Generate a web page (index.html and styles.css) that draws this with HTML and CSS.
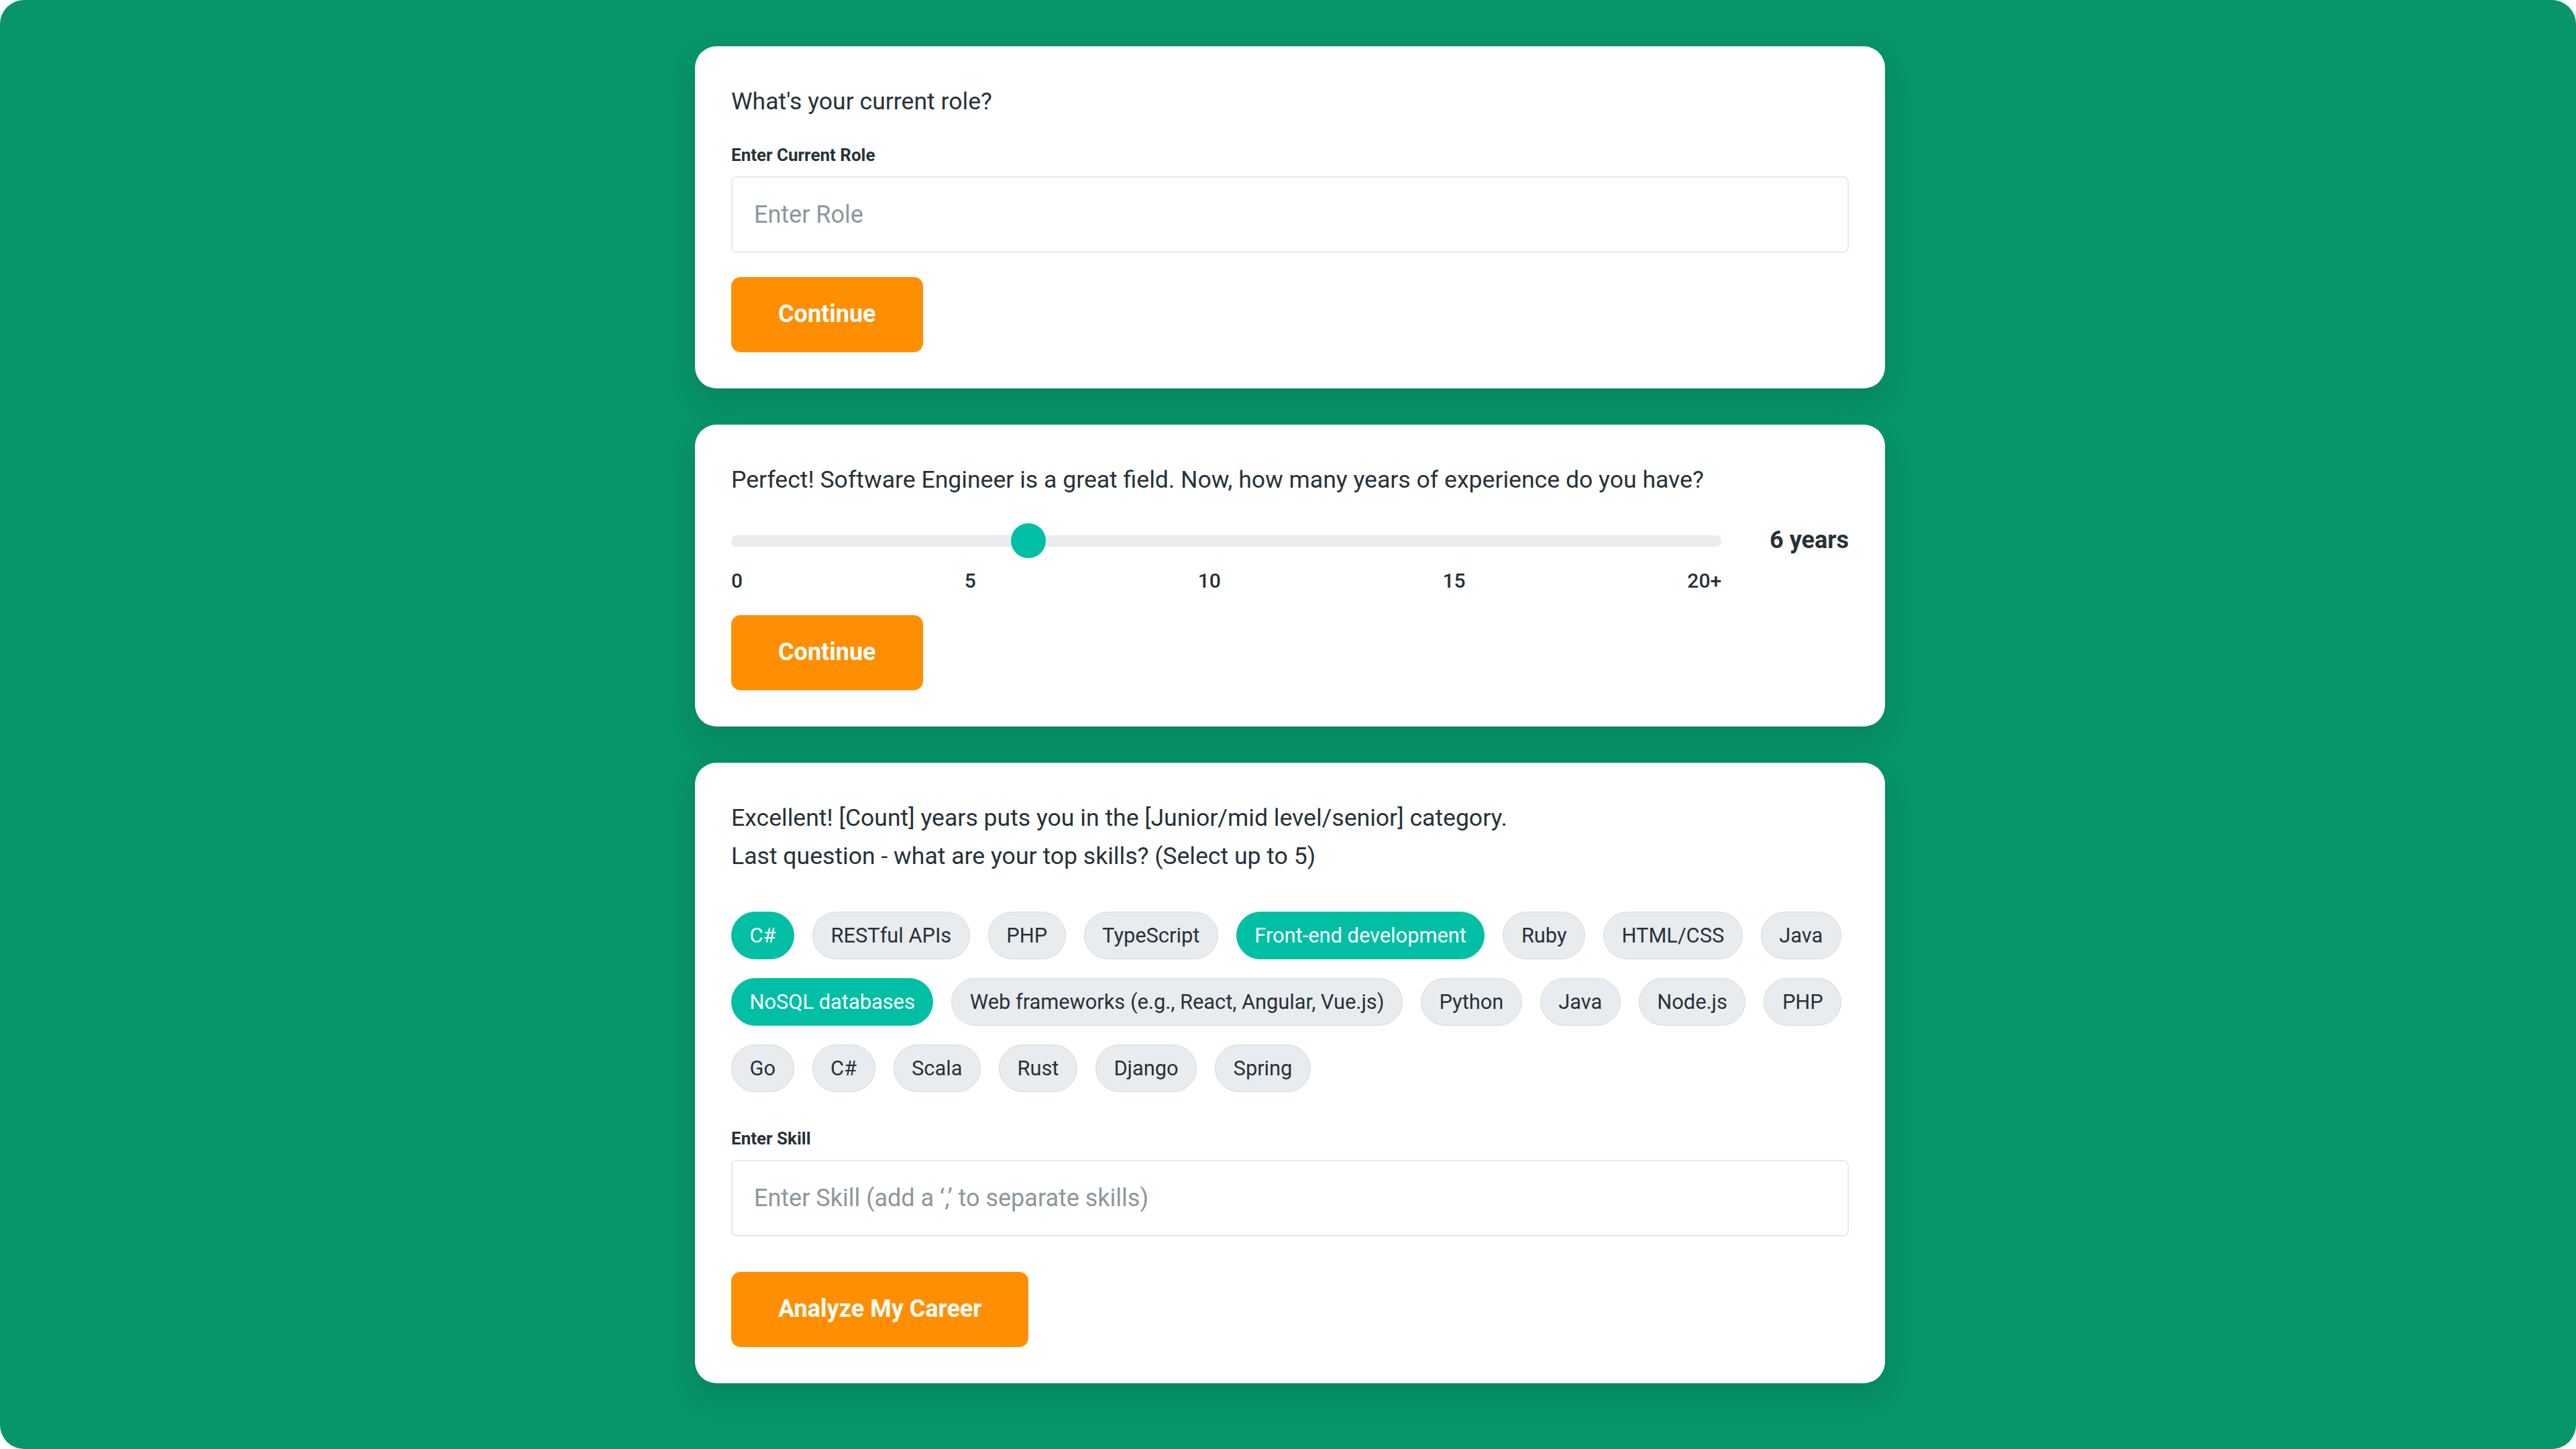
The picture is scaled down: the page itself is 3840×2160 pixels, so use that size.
FILE: index.html
```html
<!DOCTYPE html>
<html lang="en">
<head>
<meta charset="utf-8">
<title>Career Analyzer</title>
<link rel="stylesheet" href="styles.css">
</head>
<body>
<main class="screen">
  <section class="card">
    <p class="question">What's your current role?</p>
    <label class="field-label" for="role">Enter Current Role</label>
    <input class="text-input" id="role" type="text" placeholder="Enter Role">
    <button class="btn">Continue</button>
  </section>

  <section class="card">
    <p class="question">Perfect! Software Engineer is a great field. Now, how many years of experience do you have?</p>
    <div class="slider">
      <div class="track-wrap">
        <div class="track"></div>
        <div class="thumb" style="left: 30%"></div>
      </div>
      <div class="slider-value">6 years</div>
      <div class="ticks">
        <span>0</span><span>5</span><span>10</span><span>15</span><span>20+</span>
      </div>
    </div>
    <button class="btn btn-slider">Continue</button>
  </section>

  <section class="card">
    <p class="question question-multi">Excellent! [Count] years puts you in the [Junior/mid level/senior] category.<br>Last question - what are your top skills? (Select up to 5)</p>
    <div class="chips">
      <div class="chip-row">
        <span class="chip selected">C#</span>
        <span class="chip">RESTful APIs</span>
        <span class="chip">PHP</span>
        <span class="chip">TypeScript</span>
        <span class="chip selected">Front-end development</span>
        <span class="chip">Ruby</span>
        <span class="chip">HTML/CSS</span>
        <span class="chip">Java</span>
      </div>
      <div class="chip-row">
        <span class="chip selected">NoSQL databases</span>
        <span class="chip">Web frameworks (e.g., React, Angular, Vue.js)</span>
        <span class="chip">Python</span>
        <span class="chip">Java</span>
        <span class="chip">Node.js</span>
        <span class="chip">PHP</span>
      </div>
      <div class="chip-row">
        <span class="chip">Go</span>
        <span class="chip">C#</span>
        <span class="chip">Scala</span>
        <span class="chip">Rust</span>
        <span class="chip">Django</span>
        <span class="chip">Spring</span>
      </div>
    </div>
    <label class="field-label skill-label" for="skill">Enter Skill</label>
    <input class="text-input" id="skill" type="text" placeholder="Enter Skill (add a ‘,’ to separate skills)">
    <button class="btn btn-final">Analyze My Career</button>
  </section>
</main>
</body>
</html>
```

FILE: styles.css
```css
* {
  box-sizing: border-box;
}

html, body {
  margin: 0;
  padding: 0;
  background: #ffffff;
}

body {
  font-family: Roboto, "Noto Sans", "Liberation Sans", sans-serif;
  color: #263238;
}

.screen {
  width: 3840px;
  height: 2160px;
  background: #07956a;
  border-radius: 36px;
  display: flex;
  flex-direction: column;
  align-items: center;
  gap: 54px;
  padding: 69px 0 0 6px;
  overflow: hidden;
}

.card {
  width: 1774px;
  background: #ffffff;
  border-radius: 32px;
  padding: 54px;
  display: flex;
  flex-direction: column;
  align-items: flex-start;
  box-shadow: 0 18px 44px rgba(0, 40, 20, 0.16);
}

.question {
  margin: 0 0 30px;
  font-size: 35.6px;
  line-height: 57.6px;
  color: #263238;
}

.field-label {
  display: block;
  font-size: 26px;
  font-weight: 700;
  line-height: 1.6;
  margin-bottom: 11px;
  color: #263238;
}

.text-input {
  width: 100%;
  height: 114px;
  border: 2px solid #e6e9ec;
  border-radius: 8px;
  padding: 0 32px;
  font-family: Roboto, "Noto Sans", sans-serif;
  font-size: 36px;
  color: #263238;
  background: #ffffff;
  outline: none;
}

.text-input::placeholder {
  color: #8b979d;
}

.btn {
  margin-top: 36px;
  padding: 27px 70px;
  border: none;
  border-radius: 14px;
  background: #ff8f00;
  color: #ffffff;
  font-family: Roboto, "Noto Sans", sans-serif;
  font-size: 36px;
  font-weight: 700;
  line-height: 1.6;
  cursor: pointer;
}

/* Slider card */
.slider {
  width: 100%;
  margin-top: 3px;
  display: grid;
  grid-template-columns: 1fr auto;
  column-gap: 72px;
  align-items: center;
}

.track-wrap {
  position: relative;
  height: 52px;
  display: flex;
  align-items: center;
}

.track {
  width: 100%;
  height: 17px;
  border-radius: 9px;
  background: #e9ecef;
}

.thumb {
  position: absolute;
  top: 0;
  width: 52px;
  height: 52px;
  border-radius: 50%;
  background: #00bfa5;
  transform: translateX(-50%);
}

.slider-value {
  font-size: 36px;
  font-weight: 700;
  line-height: 1.6;
  color: #263238;
}

.ticks {
  margin-top: 7px;
  display: flex;
  justify-content: space-between;
  font-size: 30px;
  font-weight: 500;
  line-height: 48px;
  color: #263238;
}

.btn-slider {
  margin-top: 27px;
}

/* Skills card */
.question-multi {
  margin-bottom: 53px;
}

.chips {
  display: flex;
  flex-direction: column;
  gap: 28px;
  width: 100%;
}

.chip-row {
  display: flex;
  gap: 27px;
  white-space: nowrap;
}

.chip {
  display: inline-block;
  padding: 12px 26.5px;
  border: 1px solid #d6dadd;
  border-radius: 36px;
  background: #e9ecef;
  font-size: 30.8px;
  line-height: 45px;
  color: #263238;
}

.chip.selected {
  background: #00bfa5;
  border-color: #00bfa5;
  color: #ffffff;
}

.skill-label {
  margin-top: 49px;
}

.btn-final {
  margin-top: 53px;
}
```
